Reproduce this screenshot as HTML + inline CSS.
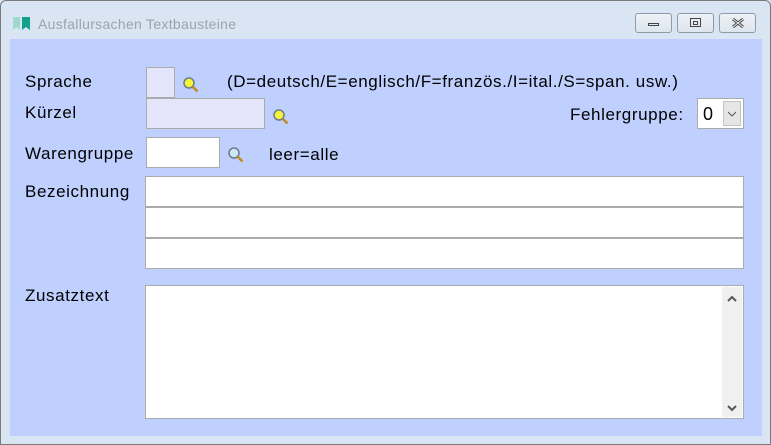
<!DOCTYPE html><html><head><style>
body{margin:0;width:771px;height:445px;overflow:hidden;background:#fff;font-family:"Liberation Sans",sans-serif}
.win{position:absolute;left:0;top:0;width:771px;height:445px;background:#d9e5f2}
.frame{position:absolute;left:0;top:0;width:771px;height:445px;border:1px solid #7a7a7a;box-sizing:border-box;border-radius:6px 6px 0 0;pointer-events:none}
.client{position:absolute;left:10px;top:39px;width:752px;height:397px;background:#bfd0ff}
.t{position:absolute;font-size:17px;letter-spacing:0.6px;color:#000;white-space:nowrap}
.box{position:absolute;border:1px solid #ababab;background:#fff;box-sizing:border-box}
.lav{background:#e4e4fb}
.mag{position:absolute;width:18px;height:18px}
.btn{position:absolute;top:13px;width:37px;height:20px;border:1px solid #8d9aaa;border-radius:3px;background:linear-gradient(#eef2f7,#dde5ee);box-sizing:border-box}
</style></head><body>
<div class="win">
<svg style="position:absolute;left:12px;top:16px" width="22" height="16"><path d="M1 1h7v13l-3.5-3L1 14z" fill="#9ed8cf"/><path d="M10 1h8v13l-4-3-4 3z" fill="#14a08c"/></svg>
<div class="t" style="left:38px;top:16px;font-size:14px;letter-spacing:0.3px;color:#9aa3ad">Ausfallursachen Textbausteine</div>
<div class="btn" style="left:635px"><div style="position:absolute;left:12px;top:9px;width:11px;height:3px;border:1px solid #444;box-sizing:border-box"></div></div>
<div class="btn" style="left:677px"><div style="position:absolute;left:12px;top:4px;width:11px;height:9px;border:1px solid #444;box-sizing:border-box"><div style="margin:2px;height:2px;border:1px solid #444"></div></div></div>
<div class="btn" style="left:719px"><svg style="position:absolute;left:11px;top:3px" width="14" height="12"><path d="M2 2l10 8M12 2L2 10" stroke="#444" stroke-width="3"/><path d="M2 2l10 8M12 2L2 10" stroke="#eee" stroke-width="1"/></svg></div>
<div class="client"></div>
<div class="t" style="left:25px;top:72px">Sprache</div>
<div class="t" style="left:25px;top:103px">Kürzel</div>
<div class="t" style="left:25px;top:144px">Warengruppe</div>
<div class="t" style="left:25px;top:182px">Bezeichnung</div>
<div class="t" style="left:25px;top:286px">Zusatztext</div>
<div class="t" style="left:227px;top:72px">(D=deutsch/E=englisch/F=französ./I=ital./S=span. usw.)</div>
<div class="t" style="left:269px;top:145px">leer=alle</div>
<div class="t" style="left:570px;top:105px">Fehlergruppe:</div>
<div class="box lav" style="left:146px;top:67px;width:29px;height:31px"></div>
<div class="box lav" style="left:146px;top:98px;width:119px;height:31px"></div>
<div class="box" style="left:146px;top:137px;width:74px;height:31px"></div>
<div class="box" style="left:697px;top:98px;width:47px;height:31px"><div class="t" style="left:5px;top:5px;font-size:18px">0</div><div style="position:absolute;right:2px;top:2px;width:18px;height:25px;background:#e6e6e6;border:1px solid #c4c4c4;box-sizing:border-box"><svg width="16" height="23"><path d="M4 10l4 4 4-4" stroke="#555" fill="none"/></svg></div></div>
<div class="box" style="left:145px;top:176px;width:599px;height:31px"></div>
<div class="box" style="left:145px;top:207px;width:599px;height:31px"></div>
<div class="box" style="left:145px;top:238px;width:599px;height:31px"></div>
<div class="box" style="left:145px;top:285px;width:599px;height:134px"><div style="position:absolute;right:1px;top:1px;width:20px;height:130px;background:#f0f0f0"><svg width="20" height="130"><path d="M6 14l4-4 4 4M6 119l4 4 4-4" stroke="#555" stroke-width="2" fill="none"/></svg></div></div>
<svg class="mag" style="left:182px;top:76px"><circle cx="7" cy="7" r="5" fill="#f4f43a" stroke="#6a7d8c" stroke-width="1.5"/><path d="M10.5 10.5l5 5" stroke="#c08a20" stroke-width="2.5"/></svg>
<svg class="mag" style="left:272px;top:108px"><circle cx="7" cy="7" r="5" fill="#f4f43a" stroke="#6a7d8c" stroke-width="1.5"/><path d="M10.5 10.5l5 5" stroke="#c08a20" stroke-width="2.5"/></svg>
<svg class="mag" style="left:227px;top:146px"><circle cx="7" cy="7" r="5" fill="#cfe6f6" stroke="#6a7d8c" stroke-width="1.5"/><path d="M10.5 10.5l5 5" stroke="#c08a20" stroke-width="2.5"/></svg>
<div class="frame"></div>
</div>
</body></html>
